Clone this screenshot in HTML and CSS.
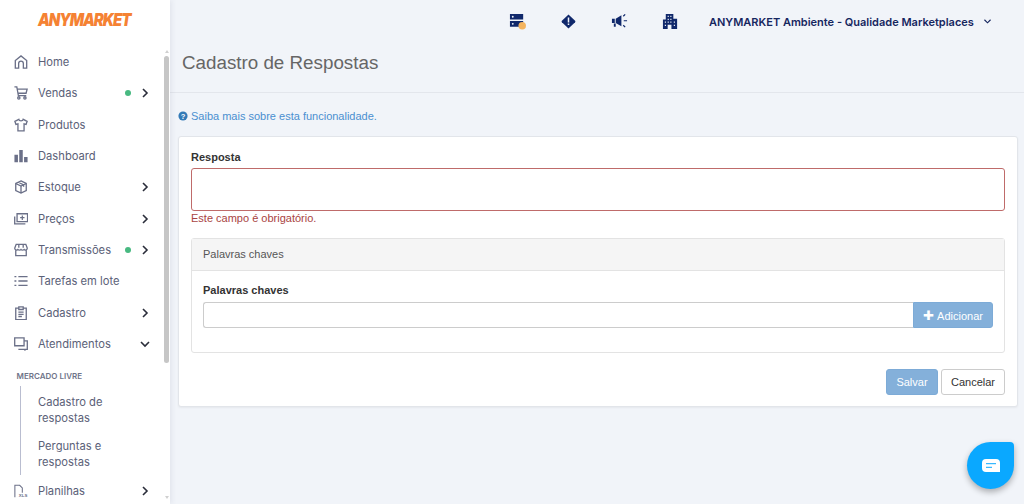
FILE: index.html
```html
<!DOCTYPE html>
<html lang="pt-BR">
<head>
<meta charset="utf-8">
<title>Cadastro de Respostas</title>
<link rel="stylesheet" href="styles.css">
</head>
<body>
<div class="app">
  <aside class="sidebar">
    <div class="logo"><span class="logo-text">ANYMARKET</span></div>
    <nav class="menu">
      <a class="item"><svg class="ico" viewBox="0 0 16 16"><path d="M1.500 15V6.300L8 1l6.500 5.300V15h-3.800V9.800a2.700 2.700 0 0 0-5.400 0V15z"/></svg><span class="lbl">Home</span></a>
      <a class="item"><svg class="ico" viewBox="0 0 16 16"><path d="M.5 1h2.700L5 11h9M3.600 3.500h11.400l-1.200 4.800H4.500"/><circle cx="5.500" cy="13.600" r="1.300"/><circle cx="12.500" cy="13.600" r="1.300"/></svg><span class="lbl">Vendas</span><i class="dot"></i><svg class="chev" viewBox="0 0 8 10"><path d="M2 1l4 4-4 4"/></svg></a>
      <a class="item"><svg class="ico" viewBox="0 0 16 16"><path d="M5.500 1.500L1 3.800l1.200 3.600 2.300-.7v8h7v-8l2.300.7L15 3.800l-4.500-2.300C10 3.800 6 3.800 5.500 1.500z"/></svg><span class="lbl">Produtos</span></a>
      <a class="item"><svg class="ico solid" viewBox="0 0 16 16"><path d="M.5 6.500h4v8.500h-4zM6 1h4v14H6zM11.500 9h4v6h-4z"/></svg><span class="lbl">Dashboard</span></a>
      <a class="item"><svg class="ico" viewBox="0 0 16 16"><path d="M8 1l6 3v8l-6 3-6-3V4zM2 4l6 3 6-3M8 7v8M5 2.600l6 3v2"/></svg><span class="lbl">Estoque</span><svg class="chev" viewBox="0 0 8 10"><path d="M2 1l4 4-4 4"/></svg></a>
      <a class="item"><svg class="ico" viewBox="0 0 16 16"><path d="M3.500 2h12v9h-12zM.8 5v8.500H13"/><path class="solid-part" d="M8.800 4h1.400v1.800H12v1.400h-1.800V9H8.800V7.200H7V5.800h1.800z"/></svg><span class="lbl">Preços</span><svg class="chev" viewBox="0 0 8 10"><path d="M2 1l4 4-4 4"/></svg></a>
      <a class="item"><svg class="ico" viewBox="0 0 16 16"><path d="M2 7.500V14.500h12V7.500M2.500 1.500h11l1.500 4a2 2 0 0 1-3.500 1.800 2.500 2.500 0 0 1-3.500 0 2.500 2.500 0 0 1-3.500 0A2 2 0 0 1 1 5.500zM5.500 1.500v4M10.500 1.500v4"/></svg><span class="lbl">Transmissões</span><i class="dot"></i><svg class="chev" viewBox="0 0 8 10"><path d="M2 1l4 4-4 4"/></svg></a>
      <a class="item"><svg class="ico wide" viewBox="0 0 16 16"><path d="M5 3h10.500M5 8h10.500M5 13h10.500M.5 3h2.200M.5 8h2.200M.5 13h2.200"/></svg><span class="lbl">Tarefas em lote</span></a>
      <a class="item"><svg class="ico" viewBox="0 0 16 16"><path d="M5 2.500H2v13h12v-13h-3M5.500 1h5v3h-5zM5 7h6M5 9.500h6M5 12h4"/></svg><span class="lbl">Cadastro</span><svg class="chev" viewBox="0 0 8 10"><path d="M2 1l4 4-4 4"/></svg></a>
      <a class="item"><svg class="ico" viewBox="0 0 16 16"><path d="M.8 1h10.700v9H.8zM11.500 4.500h3.700v9.700H5M12.500 14.200v1.500"/></svg><span class="lbl">Atendimentos</span><svg class="chev chev-down" viewBox="0 0 10 8"><path d="M1 2l4 4 4-4"/></svg></a>
    </nav>
    <div class="section">MERCADO LIVRE</div>
    <div class="sub">
      <a class="sub-item">Cadastro de<br>respostas</a>
      <a class="sub-item">Perguntas e<br>respostas</a>
    </div>
    <a class="item last"><svg class="ico thin" viewBox="0 0 16 16"><path d="M1 15V1.500h5.500L9.500 4.500V10"/><text class="xls" x="5.500" y="15">XLS</text></svg><span class="lbl">Planilhas</span><svg class="chev" viewBox="0 0 8 10"><path d="M2 1l4 4-4 4"/></svg></a>
    <div class="scrollbar"><i class="arrow up"></i><i class="thumb"></i><i class="arrow down"></i></div>
  </aside>
  <div class="main">
    <header class="topbar">
      <svg class="top-ico" viewBox="0 0 18 18"><path d="M1 1h14v6H1zM1 8.500h14v6H1z"/><circle class="tw" cx="4" cy="4" r="1"/><circle class="tw" cx="4" cy="11.500" r="1"/><circle class="warn" cx="14" cy="13.500" r="4"/></svg>
      <svg class="top-ico" viewBox="0 0 18 18"><path d="M9 1.500l7 6.800a1 1 0 0 1 0 1.400l-7 6.800-7-6.800a1 1 0 0 1 0-1.400z"/><path class="tw" d="M8.200 4.800h1.600v5.200H8.200zM8.200 11h1.600v1.600H8.200z"/></svg>
      <svg class="top-ico" viewBox="0 0 18 18"><path d="M1 6h3v4.500H1zM5 6l6-3.500v11.500l-6-3.500zM3 11h2v3.500H3z"/><path class="ln" d="M13 3.500L15 1.500M13.500 8.200h3.500M13 13l2 2"/></svg>
      <svg class="top-ico" viewBox="0 0 18 18"><path d="M4 1h8v5h4v11H1V7h3z"/><path class="tw" d="M6 3h1.200v1.300H6zM8.800 3h1.200v1.300H8.800zM6 6h1.200v1.300H6zM8.800 6h1.200v1.300H8.800zM3 9h1.200v1.300H3zM6 9h1.200v1.300H6zM8.800 9h1.200v1.300H8.800zM12.500 9h1.200v1.300h-1.200zM3 12.500h1.200v1.300H3zM12.500 12.500h1.200v1.300h-1.200zM6 12.500h4V17H6z"/></svg>
      <span class="account">ANYMARKET Ambiente - Qualidade Marketplaces</span>
      <svg class="acc-chev" viewBox="0 0 10 8"><path d="M1.500 2L5 5.500 8.500 2"/></svg>
    </header>
    <div class="page-head"><h1>Cadastro de Respostas</h1></div>
    <div class="content">
      <a class="help"><svg class="help-ico" viewBox="0 0 12 12"><circle cx="6" cy="6" r="5.500"/><text x="6" y="9.200" text-anchor="middle">?</text></svg>Saiba mais sobre esta funcionalidade.</a>
      <section class="card">
        <label class="field-label">Resposta</label>
        <input class="input invalid" type="text">
        <div class="error">Este campo é obrigatório.</div>
        <div class="panel">
          <div class="panel-head">Palavras chaves</div>
          <div class="panel-body">
            <label class="field-label">Palavras chaves</label>
            <div class="group">
              <input class="input group-input" type="text">
              <button class="btn btn-add" type="button"><span class="plus">✚</span>Adicionar</button>
            </div>
          </div>
        </div>
        <div class="actions">
          <button class="btn btn-primary" type="button">Salvar</button>
          <button class="btn btn-default" type="button">Cancelar</button>
        </div>
      </section>
    </div>
  </div>
</div>
<button class="chat" type="button" aria-label="Chat"><svg viewBox="0 0 18 13"><path d="M4 0h10a4 4 0 0 1 4 4v9H4a4 4 0 0 1-4-4V4a4 4 0 0 1 4-4z"/><path class="chat-line" d="M4 4.700h10M4 8.300h6"/></svg></button>
</body>
</html>
```
FILE: styles.css
```css
* { box-sizing: border-box; }
html, body { margin: 0; height: 100%; overflow: hidden; }
body { background: #f1f4f9; font-family: "Liberation Sans", Arial, sans-serif; font-size: 11px; color: #333; }
.app { display: flex; height: 504px; }

.sidebar { position: relative; flex: 0 0 170px; height: 504px; background: #fff; overflow: hidden; box-shadow: 2px 0 5px rgba(60,70,100,.08); z-index: 2; }
.logo { height: 45px; padding: 11px 0 0 38px; }
.logo-text { display: inline-block; font-family: "Inter", sans-serif; font-weight: 900; font-style: italic; font-size: 15px; line-height: 18px; letter-spacing: -1.100px; color: #f58233; transform: scaleY(1.2); }
.menu { display: flex; flex-direction: column; }
.item { display: flex; align-items: center; height: 31.300px; padding: 0 0 0 14px; color: #5b6178; font-family: "Inter", sans-serif; font-size: 11.200px; }
.menu .item:first-child { margin-top: 1px; }
.menu .item { padding-top: 1px; }
.ico { width: 14px; height: 14px; flex: none; fill: none; stroke: #6b7088; stroke-width: 1.500; margin-right: 10px; }
.ico.solid { fill: #6b7088; stroke: none; }
.ico.thin { stroke-width: 1.200; }
.xls { fill: #6b7088; stroke: none; font: 700 5px "Liberation Sans", sans-serif; }
.solid-part { fill: #6b7088; stroke: none; }
.lbl { flex: 1; }
.dot { width: 6px; height: 6px; border-radius: 50%; background: #48b981; margin-right: 10px; }
.chev { width: 8px; height: 10px; flex: none; fill: none; stroke: #2a2d3a; stroke-width: 1.600; margin-right: 21px; }
.chev-down { width: 10px; height: 8px; margin-right: 20px; }
.section { margin: 12px 0 0 16.500px; font-family: "Inter", sans-serif; font-size: 8px; font-weight: 600; line-height: 10px; color: #6f7489; }
.sub { margin: 5px 0 0 20px; padding: 8px 0 0 17px; border-left: 1px solid #b9bdd0; height: 89px; }
.sub-item { display: block; font-family: "Inter", sans-serif; font-size: 11.200px; line-height: 16px; color: #5b6178; margin-bottom: 12px; }
.item.last { height: 22px; margin-top: 5px; }
.scrollbar { position: absolute; top: 50px; right: 1px; bottom: 0; width: 5px; display: flex; flex-direction: column; align-items: center; }
.thumb { display: block; width: 5px; height: 307px; margin-top: 3px; background: #c6c6c6; border-radius: 3px; }
.arrow { width: 0; height: 0; border-left: 2.500px solid transparent; border-right: 2.500px solid transparent; }
.arrow.up { border-bottom: 3px solid #d0d0d0; }
.arrow.down { margin-top: auto; margin-bottom: 5px; border-top: 3px solid #d0d0d0; }

.main { flex: 1; min-width: 0; }
.topbar { display: flex; align-items: center; height: 43px; padding: 0 0 0 339px; }
.top-ico { width: 17px; height: 17px; flex: none; fill: #10286b; margin-right: 34px; }
.top-ico .tw { fill: #f1f4f9; }
.top-ico .warn { fill: #f4b45f; }
.top-ico .ln { fill: none; stroke: #10286b; stroke-width: 1.300; }
.account { font-family: "Inter", sans-serif; font-size: 11px; font-weight: 600; color: #16265f; margin-left: -4px; white-space: nowrap; }
.acc-chev { width: 9px; height: 7px; margin-left: 9px; fill: none; stroke: #16265f; stroke-width: 1.300; }
.page-head { height: 50px; padding: 9px 0 0 12px; border-bottom: 1px solid #e3e6ec; }
h1 { margin: 0; font-size: 18.800px; font-weight: 400; line-height: 22px; color: #666; }
.content { padding: 15px 6px 0 8px; }
.help { display: flex; align-items: center; height: 16px; color: #4a8fd0; font-size: 11px; }
.help-ico { width: 10px; height: 10px; margin-right: 3px; }
.help-ico circle { fill: #337ab7; }
.help-ico text { fill: #fff; font: bold 9px "Liberation Sans", sans-serif; }
.card { margin-top: 12px; padding: 13px 12px 12px 12px; height: 271px; background: #fff; border: 1px solid #e2e5ea; border-radius: 3px; box-shadow: 0 1px 2px rgba(0,0,0,.05); }
.field-label { display: block; font-weight: 700; font-size: 11px; line-height: 14px; color: #333; }
.input { display: block; width: 100%; background: #fff; border: 1px solid #ccc; border-radius: 3px; outline: none; }
.invalid { height: 43px; margin-top: 4px; border-color: #bf6b6a; }
.error { font-size: 11px; line-height: 14px; color: #a94442; }
.panel { margin-top: 13px; height: 115px; border: 1px solid #e3e3e3; border-radius: 3px; }
.panel-head { height: 32px; padding: 0 11px; line-height: 31px; font-size: 11px; color: #555; background: #f5f5f5; border-bottom: 1px solid #e3e3e3; }
.panel-body { padding: 12px 11px 0; }
.group { display: flex; margin-top: 5px; height: 26px; }
.group-input { flex: 1; height: 26px; border-right: 0; border-radius: 3px 0 0 3px; }
.btn { font-family: "Liberation Sans", sans-serif; font-size: 11px; border-radius: 3px; height: 26px; padding: 0; }
.btn-add { width: 80px; color: #fff; background: #84b0da; border: 1px solid #7dabd7; border-radius: 0 3px 3px 0; }
.plus { font-size: 12.500px; margin-right: 3px; }
.actions { display: flex; justify-content: flex-end; gap: 3px; margin-top: 16px; }
.btn-primary { width: 52px; color: #fff; background: #84b0da; border: 1px solid #7dabd7; }
.btn-default { width: 64px; color: #333; background: #fff; border: 1px solid #ccc; }

.chat { position: fixed; left: 967px; top: 442px; width: 47px; height: 47px; padding: 0; border: 0; background: #0aa8ff; border-radius: 50% 4px 50% 50%; box-shadow: 0 3px 6px rgba(0,0,0,.3); display: flex; align-items: center; justify-content: center; z-index: 3; }
.chat svg { width: 18px; height: 13px; fill: #fff; }
.chat-line { fill: none; stroke: #0aa8ff; stroke-width: 1; }
```
